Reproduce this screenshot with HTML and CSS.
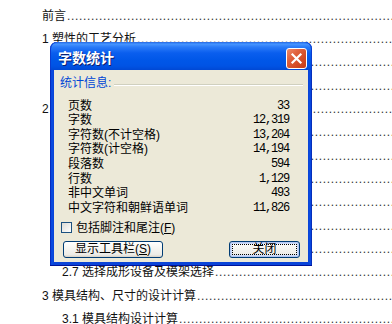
FILE: index.html
```html
<!DOCTYPE html>
<html lang="zh-CN">
<head>
<meta charset="utf-8">
<title>字数统计</title>
<link rel="stylesheet" href="styles.css">
</head>
<body>
<div class="doc">
  <div class="toc-row">前言<span class="leader">....................................................................................................</span></div>
  <div class="toc-row">1 塑性的工艺分析<span class="leader">....................................................................................................</span></div>
  <div class="toc-row sub">1.1 塑件的结构分析<span class="leader">....................................................................................................</span></div>
  <div class="toc-row sub">1.2 塑件的材料分析<span class="leader">....................................................................................................</span></div>
  <div class="toc-row">2 模具设计方案的确定<span class="leader">....................................................................................................</span></div>
  <div class="toc-row sub">2.1 型腔数目的确定<span class="leader">....................................................................................................</span></div>
  <div class="toc-row sub">2.2 分型面的选择<span class="leader">....................................................................................................</span></div>
  <div class="toc-row sub">2.3 浇注系统设计<span class="leader">....................................................................................................</span></div>
  <div class="toc-row sub">2.4 推出机构设计<span class="leader">....................................................................................................</span></div>
  <div class="toc-row sub">2.5 冷却系统设计<span class="leader">....................................................................................................</span></div>
  <div class="toc-row sub">2.6 排气系统设计<span class="leader">....................................................................................................</span></div>
  <div class="toc-row sub">2.7 选择成形设备及模架选择<span class="leader">....................................................................................................</span></div>
  <div class="toc-row">3 模具结构、尺寸的设计计算<span class="leader">....................................................................................................</span></div>
  <div class="toc-row sub">3.1 模具结构设计计算<span class="leader">....................................................................................................</span></div>
</div>

<div class="dialog">
  <div class="titlebar">
    <span class="title">字数统计</span>
    <span class="close">
      <svg width="21" height="21" viewBox="0 0 21 21"><path d="M6.5 6.5 L14.5 14.5 M14.5 6.5 L6.5 14.5" stroke="#fff" stroke-width="2.2" stroke-linecap="square" fill="none"/></svg>
    </span>
  </div>
  <div class="client">
    <div class="group-head"><span class="group-label">统计信息:</span><span class="rule"></span></div>
    <div class="stats">
      <div class="stat"><span>页数</span><span class="val">33</span></div>
      <div class="stat"><span>字数</span><span class="val">12,319</span></div>
      <div class="stat"><span>字符数(不计空格)</span><span class="val">13,204</span></div>
      <div class="stat"><span>字符数(计空格)</span><span class="val">14,194</span></div>
      <div class="stat"><span>段落数</span><span class="val">594</span></div>
      <div class="stat"><span>行数</span><span class="val">1,129</span></div>
      <div class="stat"><span>非中文单词</span><span class="val">493</span></div>
      <div class="stat"><span>中文字符和朝鲜语单词</span><span class="val">11,826</span></div>
    </div>
    <div class="check"><span class="box"></span><span>包括脚注和尾注(<u>F</u>)</span></div>
    <div class="buttons">
      <span class="btn wide">显示工具栏(<u>S</u>)</span>
      <span class="btn default"><span class="focus">关闭</span></span>
    </div>
  </div>
</div>
</body>
</html>
```

FILE: styles.css
```css
* { box-sizing: border-box; }
html, body { margin: 0; padding: 0; }
body {
  width: 392px;
  height: 324px;
  overflow: hidden;
  background: #fff;
  font-family: "Liberation Sans", "Noto Sans CJK SC", sans-serif;
  font-size: 12px;
  color: #000;
  position: relative;
}

.doc { padding: 4.7px 0 0 42px; }
.toc-row {
  height: 23.33px;
  line-height: 23.33px;
  white-space: nowrap;
  overflow: hidden;
  color: #111;
}
.toc-row.sub { padding-left: 20px; }
.leader { letter-spacing: 0.66px; color: #333; margin-left: 1px; }

/* dialog window */
.dialog {
  position: absolute;
  left: 50px;
  top: 42px;
  width: 262px;
  height: 224px;
  display: flex;
  flex-direction: column;
  background: linear-gradient(to right, #0019A8 0, #0A3FD6 1px, #0850E6 2px, #0A44D8 3px, #0A44D8 259px, #0850E6 260px, #0A3FD6 261px, #001EA0 262px);
  border-radius: 7px 7px 0 0;
  box-shadow: inset 0 -1px #00139A;
}
.titlebar {
  height: 28px;
  flex: none;
  display: flex;
  align-items: center;
  justify-content: space-between;
  padding: 0 5px 0 8px;
  border-radius: 7px 7px 0 0;
  background: linear-gradient(to bottom, #0A5AE8 0, #4896FF 2px, #2A7BF8 5px, #0A5EEE 11px, #0057E8 18px, #0053E4 24px, #0048D4 28px);
  box-shadow: inset 1px 0 #0A3CD0, inset -1px 0 #0A3CD0, inset 0 1px #2E72E8;
}
.title {
  font-family: "Noto Sans CJK SC", sans-serif;
  font-weight: bold;
  font-size: 14px;
  line-height: 16px;
  color: #fff;
  text-shadow: 1px 1px #0A1F70;
  margin-top: 2px;
}
.close {
  width: 21px;
  height: 21px;
  margin-top: 4px;
  border: 1px solid #fff;
  border-radius: 3px;
  background: linear-gradient(to bottom right, #EE8B6A 0, #E0613C 35%, #D24A24 70%, #C23C18 100%);
  display: flex;
}
.close svg { margin: -1px; }

.client {
  flex: 1;
  margin: 0 4px 4px;
  background: #ECE9D8;
  padding: 6px 5px 0 6px;
  display: flex;
  flex-direction: column;
  font-family: "Liberation Sans", "Noto Sans CJK SC", sans-serif;
  font-size: 12px;
}
.group-head {
  display: flex;
  align-items: center;
  height: 14px;
  line-height: 14px;
}
.group-label { color: #0046D5; }
.rule {
  flex: 1;
  height: 2px;
  margin: 3px 0 0 3px;
  border-top: 1px solid #D0D0BF;
  border-bottom: 1px solid #fff;
}
.stats { margin-top: 8.7px; padding: 0 14px 0 8px; }
.stat {
  display: flex;
  justify-content: space-between;
  height: 14.6px;
  line-height: 14.6px;
}
.val {
  font-family: "Liberation Mono", monospace;
  font-size: 12px;
  letter-spacing: -1.2px;
}
.check {
  display: flex;
  align-items: center;
  height: 14px;
  margin-top: 5.5px;
  padding-left: 1px;
  line-height: 14px;
}
.box {
  width: 11px;
  height: 11px;
  border: 1px solid #1C5180;
  background: linear-gradient(to bottom right, #DCDBD5, #fff);
  margin-right: 4px;
}
.buttons {
  display: flex;
  justify-content: space-between;
  margin-top: 6.5px;
  padding: 0 3px 0 3px;
}
.btn {
  height: 17px;
  display: flex;
  align-items: center;
  justify-content: center;
  border: 1px solid #003C74;
  border-radius: 3px;
  background: linear-gradient(to bottom, #FFFFFF 0, #F6F6F2 40%, #ECEBE6 85%, #D6D0C5 100%);
  line-height: 13px;
}
.btn.wide { width: 100px; }
.btn.default {
  width: 71px;
  box-shadow: inset 0 0 0 1px #B4C8F4, inset 0 0 0 2px #CEDCF8;
  padding: 2px;
}
.focus {
  flex: 1;
  align-self: stretch;
  display: flex;
  align-items: center;
  justify-content: center;
  border: 1px dotted #000;
}
```
